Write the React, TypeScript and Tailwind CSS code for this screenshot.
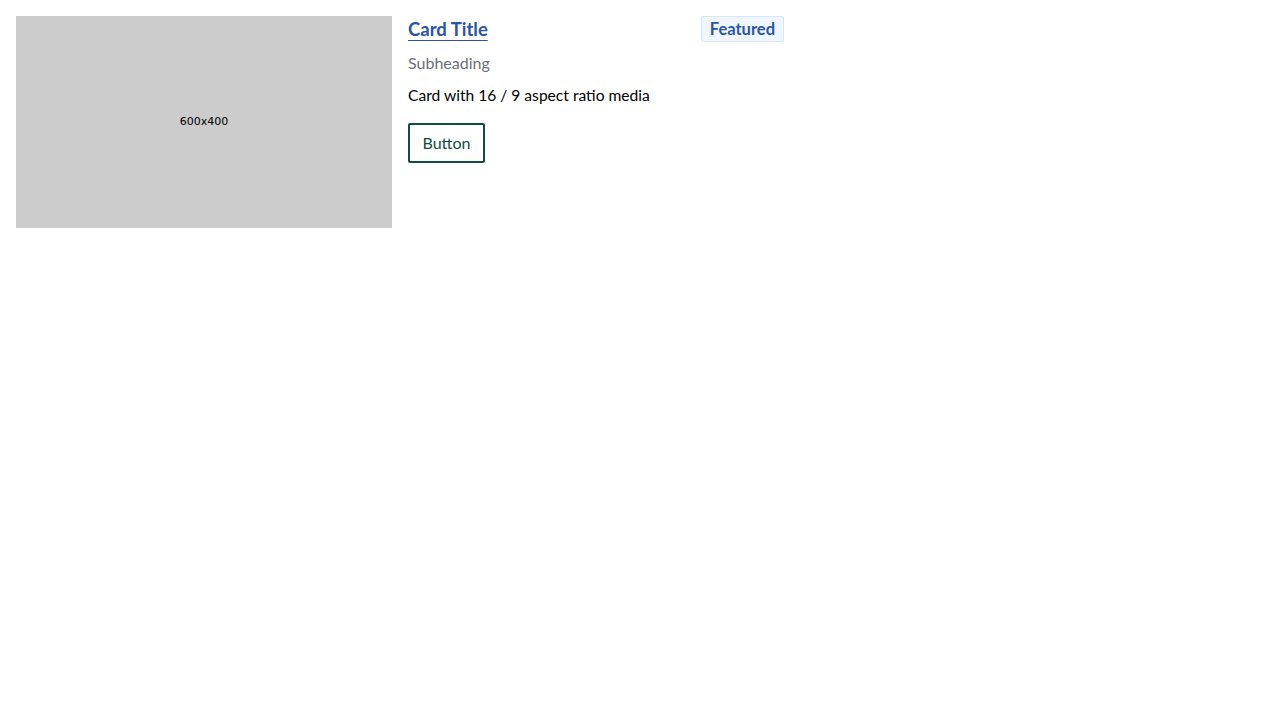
export default function App() {
  return (
    <div className="min-h-screen bg-white p-4 font-['Lato',sans-serif]">
      <div className="flex gap-4">
        <div className="flex h-[212px] w-[376px] items-center justify-center bg-[#cccccc]">
          <span className="font-['DejaVu_Sans',sans-serif] text-[11px] text-black">600x400</span>
        </div>
        <div className="flex w-[376px] flex-col">
          <div className="flex items-start justify-between">
            <a href="#" className="mt-[1px] text-[18.5px] leading-[24px] font-bold text-[#2a55a6] underline decoration-1 underline-offset-[4px]">
              Card Title
            </a>
            <span className="rounded-[2px] border border-[#d6e6fb] bg-[#f0f6ff] px-2 text-[16.5px] leading-[24px] font-bold text-[#2a55a6]">
              Featured
            </span>
          </div>
          <div className="mt-[11px] text-[16px] leading-[20px] text-[#6b6e76]">Subheading</div>
          <p className="mt-[12px] text-[15.6px] leading-[20px] text-black">Card with 16 / 9 aspect ratio media</p>
          <div className="mt-[18px]">
            <button className="h-[40px] w-[77px] rounded-[2px] border-2 border-[#0e4d3f] text-[16px] text-[#0e4d3f]">
              Button
            </button>
          </div>
        </div>
      </div>
    </div>
  )
}
